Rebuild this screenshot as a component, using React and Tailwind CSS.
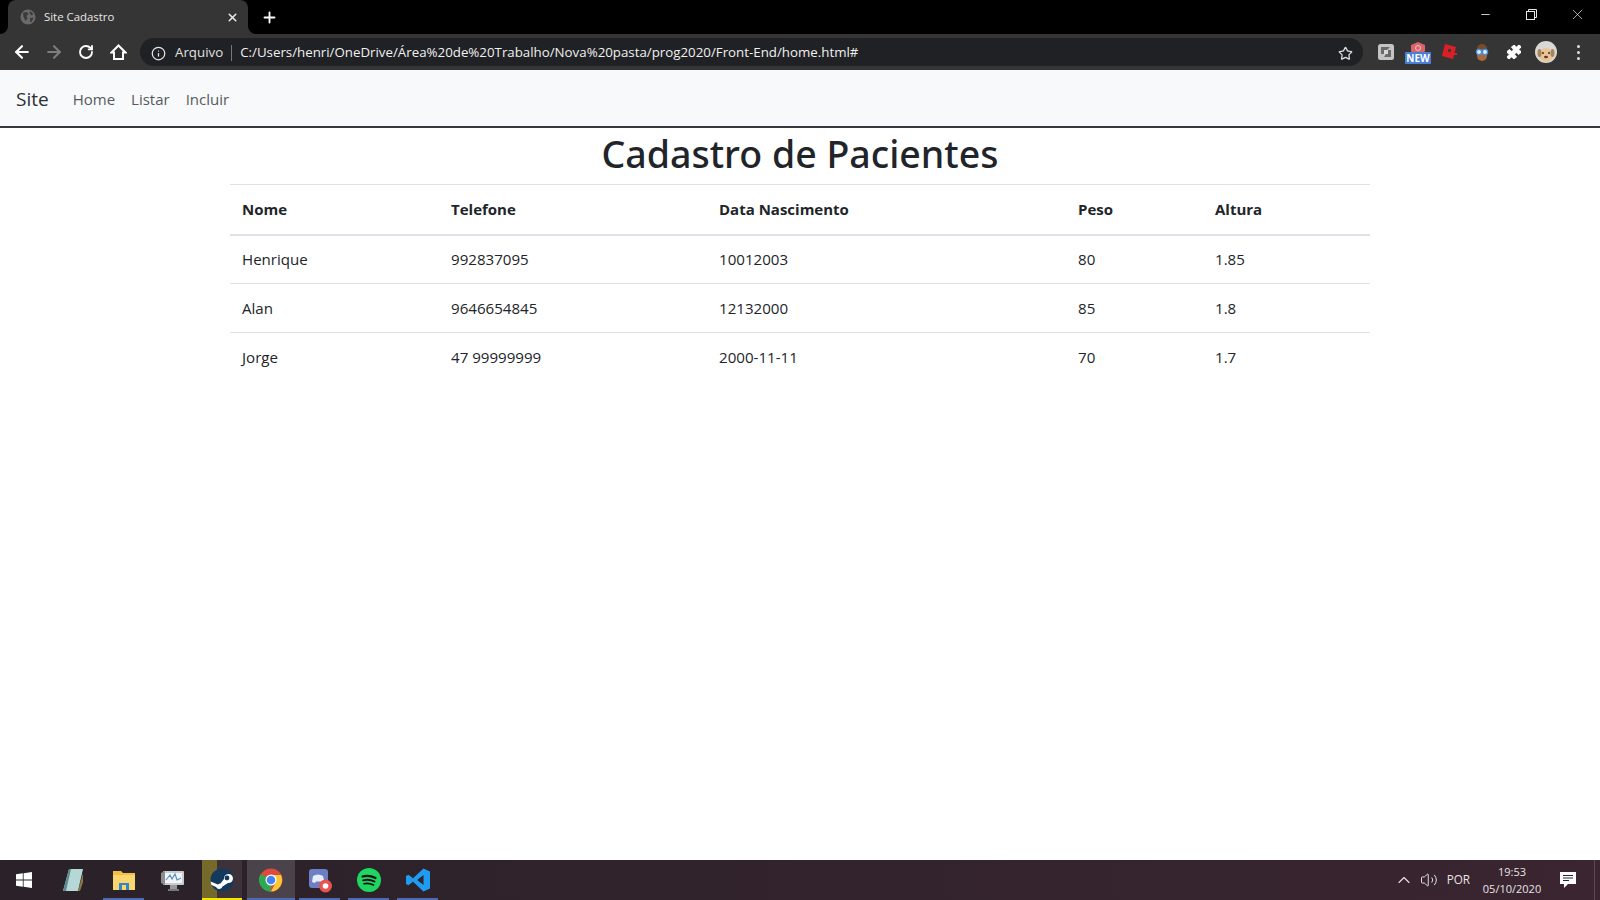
import React from 'react';
import { ArrowLeft, ArrowRight, RotateCw, Info, Star, X, Plus, Minus, ChevronUp, Volume2, Puzzle } from 'lucide-react';

const pacientes = [
    { nome: 'Henrique', telefone: '992837095', nascimento: '10012003', peso: '80', altura: '1.85' },
    { nome: 'Alan', telefone: '9646654845', nascimento: '12132000', peso: '85', altura: '1.8' },
    { nome: 'Jorge', telefone: '47 99999999', nascimento: '2000-11-11', peso: '70', altura: '1.7' },
];

function TabFlare({ flip }) {
    return (
        <svg width="8" height="8" viewBox="0 0 8 8" className="self-end shrink-0">
            <path d={flip ? 'M0 0 A8 8 0 0 0 8 8 H0 Z' : 'M8 0 A8 8 0 0 1 0 8 H8 Z'} fill="#353535" />
        </svg>
    );
}

function TabBar() {
    return (
        <div className="h-[34px] bg-black flex items-end text-white shrink-0">
            <TabFlare />
            <div className="w-[240px] h-[34px] bg-[#353535] rounded-t-lg flex items-center pl-[12px] pr-[9px]">
                <svg width="16" height="16" viewBox="0 0 16 16" className="shrink-0">
                    <circle cx="8" cy="8" r="7.5" fill="#6a6a6a" />
                    <path d="M3 3.5 L7 3 L8.5 5 L6.5 7 L7.5 9.5 L5.5 12 L3.5 8 Z M10 2 L13.5 5 L11.5 6.5 L9.5 4.5 Z M10 9 L13.5 8.5 L12 12.5 L10 13 Z" fill="#3c3c3c" />
                </svg>
                <span className="ml-[8px] text-[11.4px] text-[#e8e8e8] flex-1">Site Cadastro</span>
                <X size={13} strokeWidth={3} className="text-[#e6e6e6]" />
            </div>
            <TabFlare flip />
            <div className="h-[34px] flex items-center ml-[5px]">
                <Plus size={17} strokeWidth={2.6} />
            </div>
            <div className="ml-auto self-start flex h-[28px] items-center text-[#e8e8e8]">
                <div className="w-[46px] flex justify-center"><Minus size={13} strokeWidth={1.6} /></div>
                <div className="w-[46px] flex justify-center">
                    <svg width="11" height="11" viewBox="0 0 11 11" fill="none" stroke="currentColor">
                        <rect x="0.5" y="2.5" width="8" height="8" />
                        <path d="M2.5 2.5 V0.5 H10.5 V8.5 H8.5" />
                    </svg>
                </div>
                <div className="w-[46px] flex justify-center"><X size={17} strokeWidth={1} /></div>
            </div>
        </div>
    );
}

function Extensions() {
    return (
        <div className="flex items-center ml-[7px] mr-[6px] text-white">
            <div className="w-[32px] flex justify-center">
                <svg width="16" height="16" viewBox="0 0 16 16">
                    <rect width="16" height="16" rx="2.5" fill="#c4c4c4" />
                    <path d="M3 3 H12 L9 6 H13 V13 H6 L8 10 H3 Z" fill="#6a6a6a" />
                    <path d="M6 6 H10 V10 H6 Z" fill="#d8d8d8" />
                </svg>
            </div>
            <div className="w-[32px] flex justify-center relative h-[26px]">
                <svg width="16" height="14" viewBox="0 0 16 14" className="mt-[3px]">
                    <path d="M1 3 L8 0 L15 3 V9 L12 14 H4 L1 9 Z" fill="#d9646c" />
                    <circle cx="8" cy="6" r="2.5" fill="none" stroke="#f2c4c4" />
                </svg>
                <span className="absolute left-[3px] top-[13px] w-[26px] h-[12px] bg-[#4a7fd6] rounded-[1px] text-[10px] leading-[12px] font-bold text-center text-white">NEW</span>
            </div>
            <div className="w-[32px] flex justify-center">
                <svg width="18" height="18" viewBox="0 0 18 18">
                    <path d="M4 1 L15 4 L12 16 L1 13 Z" fill="#dc1f26" />
                    <rect x="7" y="6" width="3" height="3" fill="#3a3a3a" />
                    <rect x="12" y="10" width="4" height="2" fill="#dc1f26" />
                </svg>
            </div>
            <div className="w-[32px] flex justify-center">
                <svg width="16" height="18" viewBox="0 0 16 18">
                    <path d="M3 8 A5 6 0 0 1 13 8 L13 13 A5 5 0 0 1 3 13 Z" fill="#a9693a" />
                    <path d="M3 6 A5 5 0 0 1 13 6 V7 H3 Z" fill="#7a4a2a" />
                    <circle cx="5" cy="9" r="2.6" fill="#dfeaf5" stroke="#3f8fe0" strokeWidth="1.3" />
                    <circle cx="11" cy="9" r="2.6" fill="#dfeaf5" stroke="#3f8fe0" strokeWidth="1.3" />
                </svg>
            </div>
            <div className="w-[32px] flex justify-center">
                <Puzzle size={16} fill="white" strokeWidth={1.5} />
            </div>
            <div className="w-[32px] flex justify-center">
                <svg width="22" height="22" viewBox="0 0 22 22">
                    <circle cx="11" cy="11" r="11" fill="#d8d8d4" />
                    <ellipse cx="11" cy="14" rx="7" ry="7" fill="#e8c498" />
                    <ellipse cx="4.5" cy="12" rx="2" ry="4" fill="#a9835c" />
                    <ellipse cx="17.5" cy="12" rx="2" ry="4" fill="#a9835c" />
                    <circle cx="8" cy="12" r="1" fill="#332" />
                    <circle cx="14" cy="12" r="1" fill="#332" />
                    <ellipse cx="11" cy="16" rx="2" ry="1.3" fill="#5a3c2a" />
                </svg>
            </div>
            <div className="w-[32px] flex flex-col items-center gap-[3px]">
                <span className="w-[3px] h-[3px] rounded-full bg-[#e0e0e0]" />
                <span className="w-[3px] h-[3px] rounded-full bg-[#e0e0e0]" />
                <span className="w-[3px] h-[3px] rounded-full bg-[#e0e0e0]" />
            </div>
        </div>
    );
}

function Toolbar() {
    return (
        <div className="h-[36px] bg-[#353535] flex items-center text-white shrink-0">
            <div className="w-[140px] flex items-center shrink-0">
                <div className="w-[38px] pl-[6px] flex justify-center"><ArrowLeft size={20} strokeWidth={2.5} /></div>
                <div className="w-[32px] flex justify-center text-[#7d7d7d]"><ArrowRight size={20} strokeWidth={2.5} /></div>
                <div className="w-[32px] flex justify-center"><RotateCw size={16} strokeWidth={2.8} /></div>
                <div className="w-[32px] flex justify-center">
                    <svg width="17" height="16" viewBox="0 0 17 16" fill="none" stroke="white" strokeWidth="2">
                        <path d="M1.5 8.5 L8.5 1.5 L15.5 8.5 H13 V15 H4 V8.5 Z" strokeLinejoin="miter" />
                    </svg>
                </div>
            </div>
            <div className="flex-1 h-[28px] rounded-full bg-[#202124] flex items-center pl-[11px] pr-[10px] pt-[2px] text-[13.3px]">
                <Info size={15} strokeWidth={2} className="text-[#e8e8e8]" />
                <span className="ml-[9px] text-[#e0e0e0]">Arquivo</span>
                <span className="ml-[8px] w-px h-[16px] bg-[#777]" />
                <span className="ml-[8px] text-[#f0f0f0]">C:/Users/henri/OneDrive/Área%20de%20Trabalho/Nova%20pasta/prog2020/Front-End/home.html#</span>
                <Star size={15} strokeWidth={2} className="ml-auto text-[#e0e0e0]" />
            </div>
            <Extensions />
        </div>
    );
}

function Navbar() {
    return (
        <nav className="h-[58px] bg-[#f8f9fa] border-b-2 border-[#343a40] flex items-center pl-4 pt-[2px] text-[15px] text-[#55595d] shrink-0">
            <a className="text-[19px] text-[#2b2f33] mr-4">Site</a>
            <a className="px-2">Home</a>
            <a className="px-2">Listar</a>
            <a className="px-2">Incluir</a>
        </nav>
    );
}

function Tabela() {
    return (
        <main className="flex-1 bg-white text-[#212529]">
            <h1 className="text-[37.5px] leading-[48px] mt-[2px] mb-[6px] font-medium text-center font-['Noto_Sans',sans-serif]">Cadastro de Pacientes</h1>
            <div className="w-[1140px] mx-auto">
                <table className="w-full table-fixed border-collapse text-[15.1px] text-left">
                    <colgroup>
                        <col className="w-[209px]" />
                        <col className="w-[268px]" />
                        <col className="w-[359px]" />
                        <col className="w-[137px]" />
                        <col className="w-[167px]" />
                    </colgroup>
                    <thead>
                        <tr className="h-[50px] border-t border-b-2 border-t-[#dee2e6] border-b-[#dee2e6] text-[15px]">
                            <th className="px-3 font-bold">Nome</th>
                            <th className="px-3 font-bold">Telefone</th>
                            <th className="px-3 font-bold">Data Nascimento</th>
                            <th className="px-3 font-bold">Peso</th>
                            <th className="px-3 font-bold">Altura</th>
                        </tr>
                    </thead>
                    <tbody>
                        {pacientes.map((p, i) => (
                            <tr key={p.nome} className={i > 0 ? 'h-[49px] border-t border-[#dee2e6]' : 'h-[49px]'}>
                                <td className="px-3">{p.nome}</td>
                                <td className="px-3">{p.telefone}</td>
                                <td className="px-3">{p.nascimento}</td>
                                <td className="px-3">{p.peso}</td>
                                <td className="px-3">{p.altura}</td>
                            </tr>
                        ))}
                    </tbody>
                </table>
            </div>
        </main>
    );
}

function TaskItem({ children, bar, className = '' }) {
    return (
        <div className={`w-[49px] h-full flex items-center justify-center relative ${className}`}>
            {children}
            {bar && <span className={`absolute bottom-0 left-[4px] right-[4px] h-[2px] ${bar}`} />}
        </div>
    );
}

function Taskbar() {
    return (
        <footer className="h-[40px] bg-gradient-to-r from-[#2a2129] to-[#3a2530] flex items-center text-white shrink-0">
            <div className="w-[48px] flex justify-center">
                <svg width="16" height="16" viewBox="0 0 16 16" fill="white">
                    <path d="M0 2.3 L6.8 1.3 V7.5 H0 Z M7.6 1.2 L16 0 V7.5 H7.6 Z M0 8.4 H6.8 V14.7 L0 13.7 Z M7.6 8.4 H16 V16 L7.6 14.8 Z" />
                </svg>
            </div>
            <TaskItem>
                <svg width="22" height="24" viewBox="0 0 22 24">
                    <path d="M7 1 H21 L16 23 H1 Z" fill="#b5d8d6" />
                    <path d="M1 23 L7 1 L9 1 L4 23 Z" fill="#5d8c90" />
                    <path d="M16 23 L21 5 L21 14 L18 23 Z" fill="#8a7a4a" />
                </svg>
            </TaskItem>
            <TaskItem bar="bg-[#4d6bb5]" className="ml-[2px]">
                <svg width="22" height="20" viewBox="0 0 22 20">
                    <path d="M0 1 H8 L10 3 H22 V20 H0 Z" fill="#f4bf45" />
                    <rect x="0" y="5" width="22" height="15" fill="#f9d66e" />
                    <rect x="6" y="13" width="10" height="7" fill="#2f88c9" />
                    <rect x="9" y="15" width="4" height="5" fill="#f9d66e" />
                </svg>
            </TaskItem>
            <TaskItem>
                <svg width="24" height="22" viewBox="0 0 24 22">
                    <rect x="2" y="2" width="21" height="14" rx="1" fill="#c8ccd0" />
                    <rect x="4" y="4" width="17" height="10" fill="#f2f5f8" />
                    <path d="M5 11 L9 6 L11 10 L14 5 L16 11 L20 9" fill="none" stroke="#5a8fc2" strokeWidth="1.2" />
                    <path d="M0 4 L4 2 V16 L0 14 Z" fill="#8c8c8c" />
                    <rect x="9" y="16" width="7" height="4" fill="#9a9a9a" />
                    <rect x="7" y="20" width="11" height="2" fill="#777" />
                </svg>
            </TaskItem>
            <div className="w-[40px] h-full flex items-center justify-center relative ml-[5px] bg-[linear-gradient(to_right,#75692b_0,#75692b_15px,#3d3239_15px)]">
                <svg width="24" height="24" viewBox="0 0 24 24">
                    <circle cx="12" cy="12" r="11.5" fill="#14395f" />
                    <path d="M0.5 13.5 L8 16.5 A3.5 3.5 0 0 1 10.5 15.5 L14 11 A4.5 4.5 0 1 1 18 15 L12.5 18.5 A3.5 3.5 0 0 1 6 19 L1.5 17 Z" fill="white" />
                    <circle cx="17" cy="10" r="2.4" fill="#14395f" />
                </svg>
                <span className="absolute bottom-0 inset-x-0 h-[2px] bg-[#f7e600]" />
            </div>
            <div className="w-[48px] h-full flex items-center justify-center relative ml-[5px] bg-[#4b434a]">
                <svg width="24" height="24" viewBox="0 0 24 24">
                    <circle cx="12" cy="12" r="11.5" fill="#dd4b3e" />
                    <path d="M12 12 L1.7 6 A11.5 11.5 0 0 0 12 23.5 Z" fill="#2da94f" />
                    <path d="M12 7 H22 A11.5 11.5 0 0 1 12 23.5 L17 14 Z" fill="#fcc934" />
                    <circle cx="12" cy="12" r="5.5" fill="white" />
                    <circle cx="12" cy="12" r="4.3" fill="#4285f4" />
                </svg>
                <span className="absolute bottom-0 inset-x-0 h-[2px] bg-[#4d6bb5]" />
            </div>
            <TaskItem bar="bg-[#4d6bb5]">
                <svg width="26" height="26" viewBox="0 0 26 26">
                    <rect x="2" y="2" width="19" height="19" rx="3" fill="#6c7fc4" />
                    <path d="M6 9 Q11 6 16 9 L17.5 15 L15 16 L14 14.5 H9 L8 16 L5 15 Z" fill="#e8ebf8" />
                    <circle cx="18.5" cy="19" r="6.5" fill="#e9524f" />
                    <circle cx="18.5" cy="19" r="2.8" fill="white" />
                </svg>
            </TaskItem>
            <TaskItem bar="bg-[#4d6bb5]">
                <svg width="24" height="24" viewBox="0 0 24 24" fill="none">
                    <circle cx="12" cy="12" r="12" fill="#1ed760" />
                    <path d="M5.5 8.5 Q12 6.5 18.5 10" stroke="#121212" strokeWidth="2.2" strokeLinecap="round" />
                    <path d="M6.2 12.3 Q12 10.7 17.5 13.5" stroke="#121212" strokeWidth="1.9" strokeLinecap="round" />
                    <path d="M7 15.8 Q12 14.5 16.5 17" stroke="#121212" strokeWidth="1.6" strokeLinecap="round" />
                </svg>
            </TaskItem>
            <TaskItem bar="bg-[#4d6bb5]">
                <svg width="24" height="24" viewBox="0 0 24 24">
                    <path d="M17.5 0.5 L24 3.5 V20.5 L17.5 23.5 L7 13.8 L2.5 17.3 L0 16 V8 L2.5 6.7 L7 10.2 Z M17.5 7 L11.2 12 L17.5 17 Z" fill="#1f9cf0" />
                </svg>
            </TaskItem>
            <div className="ml-auto flex items-center h-full text-[#e8e4e6] text-[11.7px]">
                <ChevronUp size={20} strokeWidth={1.3} />
                <Volume2 size={18} strokeWidth={1.3} className="ml-[6px]" />
                <span className="ml-[9px]">POR</span>
                <div className="ml-[11px] w-[62px] text-center text-[11px] leading-[17px]">
                    <div>19:53</div>
                    <div>05/10/2020</div>
                </div>
                <div className="ml-[17px] mr-[18px]">
                    <svg width="16" height="16" viewBox="0 0 16 16">
                        <path d="M0 0 H16 V12 H8 L4 16 V12 H0 Z" fill="white" />
                        <path d="M3 3.5 H13 M3 6 H13 M3 8.5 H9" stroke="#2c222b" strokeWidth="1" />
                    </svg>
                </div>
                <span className="w-px h-full bg-[#5a4a55] mr-[5px]" />
            </div>
        </footer>
    );
}

export default function App() {
    return (
        <div className="h-[900px] flex flex-col overflow-hidden font-['Open_Sans','Noto_Sans',sans-serif]">
            <TabBar />
            <Toolbar />
            <Navbar />
            <Tabela />
            <Taskbar />
        </div>
    );
}
